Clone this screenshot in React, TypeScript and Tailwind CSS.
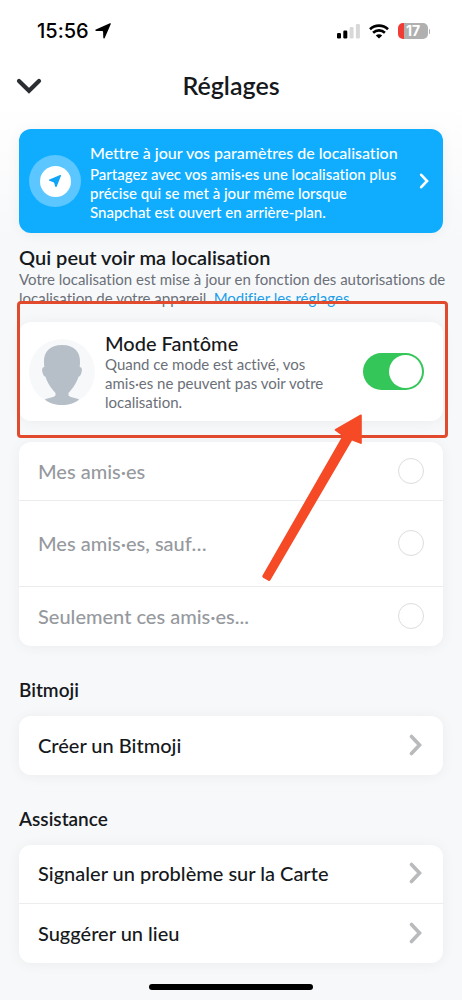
import { useState, type ReactNode } from "react";

function Chevron({ className }: { className: string }) {
  return (
    <svg viewBox="0 0 14 22" className={className} fill="none" stroke="currentColor" strokeWidth="3.6" strokeLinecap="round" strokeLinejoin="miter" aria-hidden="true">
      <path d="M2.500 2.500 10.500 11l-8 8.500" />
    </svg>
  );
}

function StatusBar() {
  return (
    <div className="flex h-[62px] items-center justify-between pr-8 pl-[37px]">
      <div className="flex items-center gap-[6px]">
        <span className="font-['Inter',sans-serif] text-[20px] font-medium text-black">15:56</span>
        <svg viewBox="0 0 16 16" className="size-4" aria-hidden="true">
          <path d="M14.900.3c.7-.2 1.100.2.800.9L9.700 15c-.4.900-1.300.7-1.400-.2L8.100 9.300c0-.8-.4-1.200-1.200-1.200L1.200 7.900C.2 7.800 0 6.900.9 6.500z" fill="#000" />
        </svg>
      </div>
      <div className="flex items-center gap-[9px]">
        <svg viewBox="0 0 23 16" className="h-4 w-[23px]" aria-hidden="true">
          <rect x="0" y="10" width="4" height="5.500" rx="1.300" fill="#000" />
          <rect x="6.300" y="7.500" width="4" height="8" rx="1.300" fill="#000" />
          <rect x="12.600" y="4" width="4" height="11.500" rx="1.300" fill="#d8d8da" />
          <rect x="18.900" y="1" width="4" height="14.500" rx="1.300" fill="#d8d8da" />
        </svg>
        <svg viewBox="0 0 20 15" className="h-[15px] w-5" fill="none" stroke="#000" strokeWidth="2.600" aria-hidden="true">
          <path d="M1 5.200C6 .4 14 .4 19 5.200" />
          <path d="M4.100 8.700c3.400-3.100 8.400-3.100 11.800 0" />
          <path d="M6.800 11.400c1.800-1.700 4.600-1.700 6.400 0L10 14.600z" fill="#000" stroke="none" />
        </svg>
        <div className="flex items-center gap-px">
          <div className="flex h-4 w-[30px] items-center justify-center rounded-[5px] bg-[linear-gradient(90deg,#f03c35_0_6px,#b0b0b1_6px)]">
            <span className="font-['Inter',sans-serif] text-[14px] leading-4 font-bold text-white">17</span>
          </div>
          <div className="h-[5px] w-px rounded-r bg-[#b0b0b1]" />
        </div>
      </div>
    </div>
  );
}

function LinkRow({ children }: { children: ReactNode }) {
  return (
    <a href="#" className="flex h-[59px] items-center justify-between pr-5 pb-[2px] pl-[19px] text-[20px] font-medium text-[#16191c]">
      {children}
      <Chevron className="h-[22px] w-[14px] text-[#b9babc]" />
    </a>
  );
}

const card = "rounded-xl bg-white shadow-[0_1px_14px_rgba(0,0,0,0.05)]";

const audiences = [
  { id: "friends", label: "Mes amis·es", height: "h-[59px]" },
  { id: "except", label: "Mes amis·es, sauf…", height: "h-[86px]" },
  { id: "only", label: "Seulement ces amis·es...", height: "h-[59px]" },
];

export default function App() {
  const [ghost, setGhost] = useState(true);
  const [audience, setAudience] = useState("");
  return (
    <div className="min-h-screen overflow-hidden bg-[#f7f8fa] bg-[linear-gradient(#fff_0_100px,#f7f8fa_240px)] font-['Lato','Liberation_Sans',sans-serif] [font-variant-ligatures:none]">
      <StatusBar />
      <header className="grid h-12 grid-cols-[1fr_auto_1fr] items-center px-4">
        <button type="button" aria-label="Fermer" className="justify-self-start">
          <svg viewBox="0 0 26 18" className="h-[18px] w-[26px]" fill="none" stroke="#2a2d32" strokeWidth="4.200" strokeLinecap="round" aria-hidden="true">
            <path d="M3 4l10 9.700L23 4" />
          </svg>
        </button>
        <h1 className="pb-[2px] text-[25px] leading-8 font-semibold text-[#16191c]">Réglages</h1>
      </header>

      <main className="px-[19px] pt-[19px]">
        <a href="#" className="flex h-[104px] items-center rounded-xl bg-[#10adff] pr-[13px] pl-[10px] text-white shadow-[0_1px_14px_rgba(0,0,0,0.05)]">
          <span className="flex size-[52px] shrink-0 items-center justify-center rounded-full bg-[#5bc6ff]">
            <span className="flex size-[31px] items-center justify-center rounded-full bg-white">
              <svg viewBox="0 0 14 14" className="size-[14px]" aria-hidden="true">
                <path d="M12.100 1c.7-.2 1.100.2.800.9L8.700 12.500c-.3.700-1.100.7-1.400 0L6 8.400 1.500 6.800c-.8-.3-.8-1.100 0-1.400z" fill="#10a5f5" />
              </svg>
            </span>
          </span>
          <span className="ml-[9px] flex-1 whitespace-nowrap">
            <span className="block text-[16px] leading-6 font-medium">Mettre à jour vos paramètres de localisation</span>
            <span className="block text-[15px] leading-[19px] font-medium">
              Partagez avec vos amis·es une localisation plus<br />
              précise qui se met à jour même lorsque<br />
              Snapchat est ouvert en arrière-plan.
            </span>
          </span>
          <Chevron className="h-4 w-[11px] shrink-0" />
        </a>

        <section className="pt-[12px]">
          <h2 className="text-[20px] leading-6 font-semibold text-[#16191c]">Qui peut voir ma localisation</h2>
          <p className="pt-px text-[15px] leading-[19px] whitespace-nowrap text-[#6b7078]">
            Votre localisation est mise à jour en fonction des autorisations de<br />
            localisation de votre appareil.{" "}
            <a href="#" className="text-[#1e9fe8]">Modifier les réglages</a>
          </p>

          <div className={`${card} relative mt-[14px] flex h-[99px] items-center pr-[19px] pl-[10px]`}>
            <svg viewBox="0 0 66 66" className="size-[66px] shrink-0" aria-hidden="true">
              <circle cx="33" cy="33" r="33" fill="#f6f8fa" />
              <path d="M33 6c12 0 18.500 7 18 17.500l-.3 4.500c2.300.3 2.500 2.500 1.900 5-.6 2.700-1.500 4.500-3.100 4.700-1.300 4.500-4.500 10.300-10 16.300v2.500c2.500 2.500 7 2 10.500 4C45.500 64.500 39.500 66 33 66s-12.500-1.500-17-5.500c3.500-2 8-1.500 10.500-4V54c-5.500-6-8.700-11.800-10-16.300-1.600-.2-2.500-2-3.100-4.700-.6-2.500-.4-4.700 1.900-5l-.3-4.500C14.500 13 21 6 33 6z" fill="#b6bec8" />
            </svg>
            <label htmlFor="ghost" className="ml-[10px] flex-1">
              <span className="block text-[20px] leading-6 font-medium text-[#16191c]">Mode Fantôme</span>
              <span className="block text-[15px] leading-[19px] text-[#6b7078]">
                Quand ce mode est activé, vos<br />
                amis·es ne peuvent pas voir votre<br />
                localisation.
              </span>
            </label>
            <input
              id="ghost"
              type="checkbox"
              role="switch"
              checked={ghost}
              onChange={(e) => setGhost(e.target.checked)}
              className="flex h-[37px] w-[61px] shrink-0 appearance-none items-center rounded-full bg-[#d9dadd] p-[2px] before:block before:size-[33px] before:rounded-full before:bg-white checked:justify-end checked:bg-[#34c659]"
            />
            <div className="pointer-events-none absolute -top-[21px] -right-[5px] -bottom-[17px] -left-[2px] z-10 rounded-[4px] border-3 border-[#e24a2e]" />
            <svg viewBox="0 0 100 168" className="pointer-events-none absolute top-[92px] right-[81px] z-10 h-[168px] w-[100px]" fill="#f54a25" aria-hidden="true">
              <path d="M98.500.6c.8-.4 1.300 0 1.300.9V29c0 1-.6 1.300-1.400.8l-8.400-3.300L8.500 166c-.5.900-1.300 1.100-2.100.7l-5.300-3c-.8-.5-1.100-1.300-.6-2.200L80.500 22l-7.200-5.200c-.9-.6-.9-1.300 0-1.800z" />
            </svg>
          </div>

          <div role="radiogroup" aria-label="Qui peut voir ma localisation" className={`${card} mt-[21px] divide-y divide-[#ebecee]`}>
            {audiences.map((a) => (
              <label key={a.id} className={`${a.height} flex items-center justify-between pr-[19px] pb-px pl-[19px] text-[20px] font-medium text-[#96999e]`}>
                {a.label}
                <input
                  type="radio"
                  name="audience"
                  checked={audience === a.id}
                  onChange={() => setAudience(a.id)}
                  className="size-[26px] appearance-none rounded-full border border-[#dcdddf] bg-white checked:border-8 checked:border-[#10adff]"
                />
              </label>
            ))}
          </div>
        </section>

        <section className="pt-8">
          <h2 className="text-[19px] leading-6 font-semibold text-[#16191c]">Bitmoji</h2>
          <div className={`${card} mt-[14px]`}>
            <LinkRow>Créer un Bitmoji</LinkRow>
          </div>
        </section>

        <section className="pt-8">
          <h2 className="text-[19px] leading-6 font-semibold text-[#16191c]">Assistance</h2>
          <div className={`${card} mt-[14px] divide-y divide-[#ebecee]`}>
            <LinkRow>Signaler un problème sur la Carte</LinkRow>
            <LinkRow>Suggérer un lieu</LinkRow>
          </div>
        </section>
      </main>
      <div className="mx-auto mt-[21px] mb-[10px] h-[6px] w-[164px] rounded-full bg-black" />
    </div>
  );
}
